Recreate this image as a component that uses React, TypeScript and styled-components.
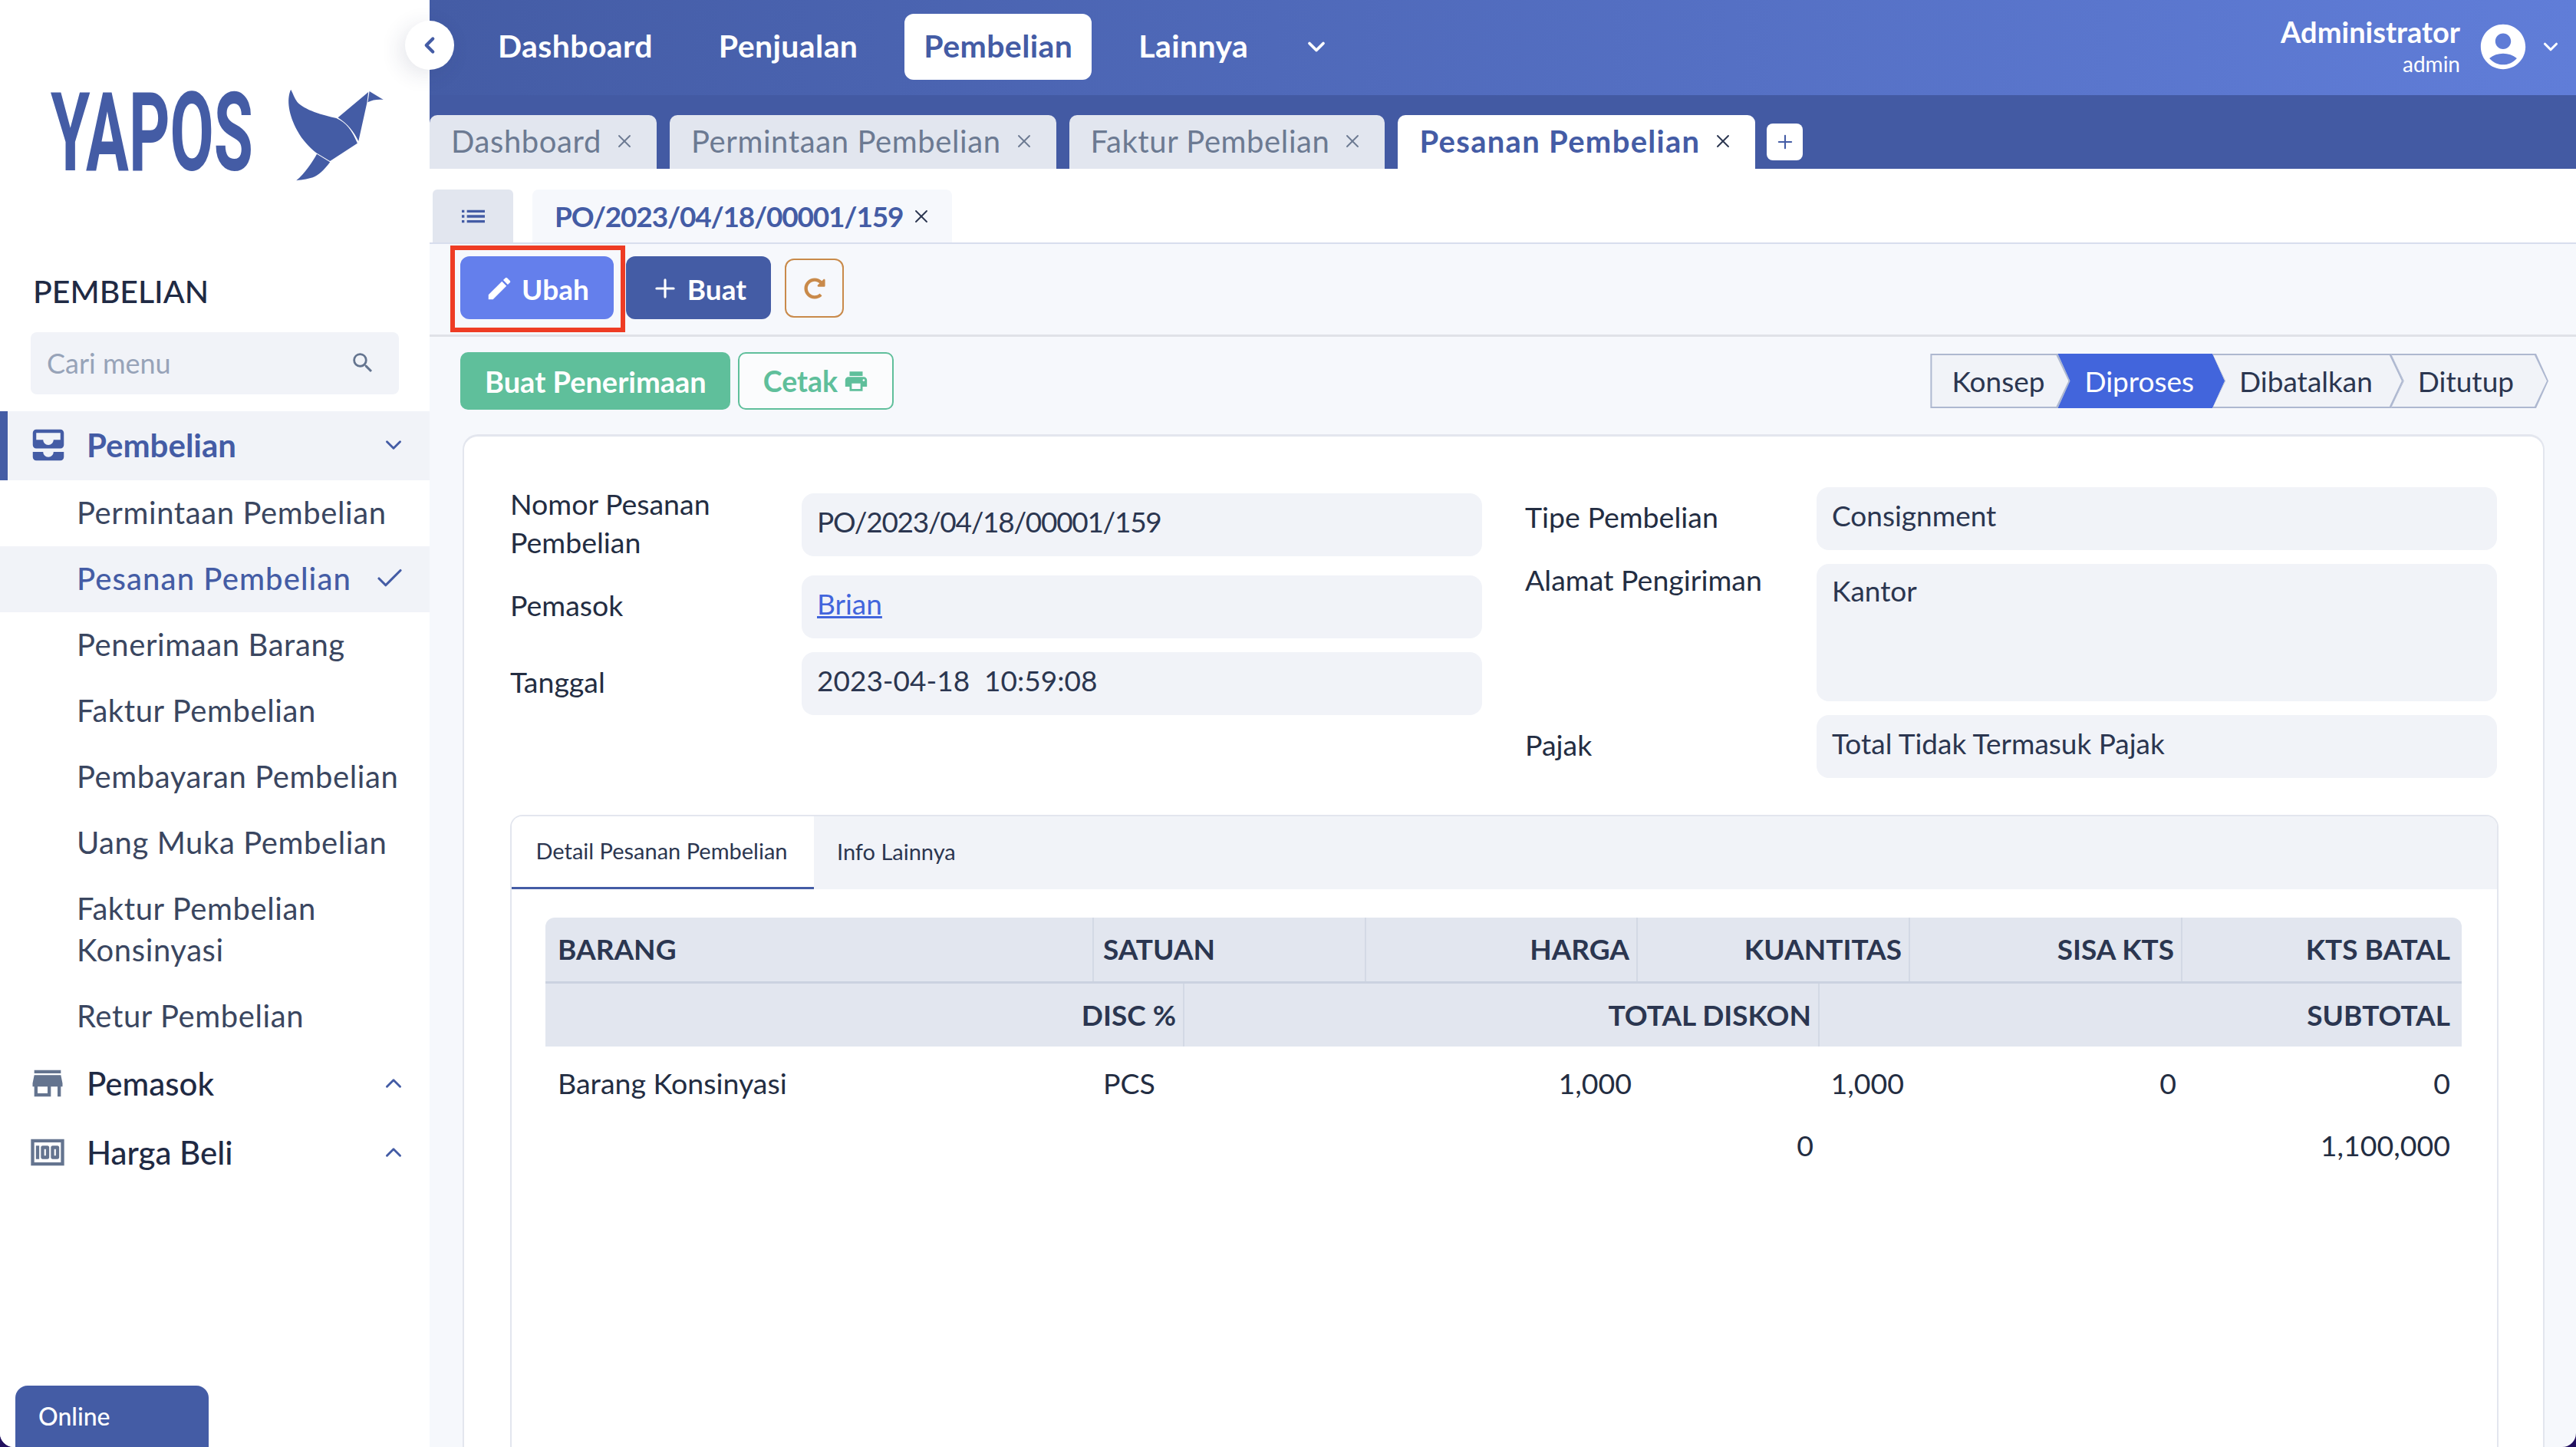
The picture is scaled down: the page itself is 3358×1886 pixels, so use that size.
import React from 'react';
import styled, { createGlobalStyle } from 'styled-components';
import { ChevronDown, ChevronLeft, ChevronUp, Check, Plus, X } from 'lucide-react';
import {
  MdAccountCircle,
  MdAllInbox,
  MdEdit,
  MdList,
  MdMoney,
  MdPrint,
  MdSearch,
  MdStore,
} from 'react-icons/md';
import { FaRedoAlt } from 'react-icons/fa';

const brand = '#445ca5';
const ink = '#2b3650';
const soft = '#f1f3f8';
const page = '#f6f8fc';
const green = '#5fbf9b';

const GlobalStyle = createGlobalStyle`
  html, body {
    margin: 0;
    padding: 0;
    background: #22105f;
  }
  body {
    font-family: Lato, "Open Sans", sans-serif;
    color: ${ink};
  }
  * { box-sizing: border-box; }
`;

const Screen = styled.div`
  width: 3358px;
  height: 1886px;
  display: flex;
  overflow: hidden;
  background: ${page};
  border-radius: 0 0 18px 18px;
`;

const Sidebar = styled.aside`
  position: relative;
  width: 560px;
  flex: none;
  display: flex;
  flex-direction: column;
  background: #fff;
  z-index: 2;
`;

const CollapseButton = styled.div`
  position: absolute;
  top: 27px;
  right: -32px;
  width: 64px;
  height: 64px;
  border-radius: 50%;
  background: #fff;
  color: ${brand};
  display: flex;
  align-items: center;
  justify-content: center;
  box-shadow: -6px 6px 28px rgba(40, 50, 90, 0.12);
`;

const LogoWrap = styled.div`
  height: 340px;
  padding: 76px 0 0 60px;
`;

const SideTitle = styled.h2`
  margin: 0;
  padding-left: 43px;
  height: 93px;
  font-size: 41px;
  line-height: 80px;
  font-weight: 500;
  color: #1f2a44;
`;

const SearchBox = styled.div`
  margin: 0 40px 22px;
  height: 81px;
  border-radius: 8px;
  background: ${soft};
  display: flex;
  align-items: center;
  justify-content: space-between;
  padding: 0 30px 2px 21px;
  font-size: 36px;
  color: #97a3b8;
`;

const MenuParent = styled.div<{ $active?: boolean }>`
  height: 90px;
  display: flex;
  align-items: center;
  padding: 0 30px 2px ${(p) => (p.$active ? 33 : 43)}px;
  font-size: 42px;
  font-weight: ${(p) => (p.$active ? 700 : 500)};
  color: ${(p) => (p.$active ? brand : '#1f2a44')};
  background: ${(p) => (p.$active ? soft : 'transparent')};
  border-left: ${(p) => (p.$active ? `10px solid ${brand}` : '0')};
`;

const MenuIcon = styled.span<{ $muted?: boolean }>`
  width: 77px;
  display: flex;
  align-items: center;
  margin-left: -7px;
  color: ${(p) => (p.$muted ? '#64748f' : brand)};
`;

const MenuLabel = styled.span`
  flex: 1;
`;

const MenuArrow = styled.span`
  color: ${brand};
  display: flex;
`;

const SubItem = styled.div<{ $active?: boolean }>`
  min-height: 86px;
  padding: 15px 31px 17px 100px;
  display: flex;
  align-items: center;
  justify-content: space-between;
  font-size: 40px;
  letter-spacing: ${(p) => (p.$active ? 1.1 : 0.6)}px;
  line-height: 54px;
  color: ${(p) => (p.$active ? brand : '#3a4660')};
  font-weight: ${(p) => (p.$active ? 500 : 400)};
  background: ${(p) => (p.$active ? soft : 'transparent')};
`;

const OnlineBadge = styled.div`
  margin: auto 0 0 20px;
  width: 252px;
  height: 80px;
  background: ${brand};
  border-radius: 16px 16px 0 0;
  padding: 0 0 2px 30px;
  display: flex;
  align-items: center;
  font-size: 32px;
  font-weight: 500;
  color: #fff;
`;

const Main = styled.main`
  flex: 1;
  min-width: 0;
  display: flex;
  flex-direction: column;
`;

const TopBar = styled.header`
  height: 124px;
  flex: none;
  display: flex;
  align-items: center;
  gap: 36px;
  padding: 0 18px 3px 64px;
  background: linear-gradient(90deg, #445ca5, #607dd8);
`;

const NavItem = styled.div<{ $active?: boolean }>`
  height: 86px;
  padding: 0 25px 2px;
  display: flex;
  align-items: center;
  border-radius: 12px;
  font-size: 41px;
  letter-spacing: 0.4px;
  font-weight: 700;
  color: ${(p) => (p.$active ? brand : '#fff')};
  background: ${(p) => (p.$active ? '#fff' : 'transparent')};
`;

const NavArrow = styled.span`
  color: #fff;
  display: flex;
  margin-left: 10px;
`;

const UserBlock = styled.div`
  margin-left: auto;
  display: flex;
  align-items: center;
  color: #fff;
`;

const UserText = styled.div`
  text-align: right;
  margin-right: 21px;
`;

const UserName = styled.div`
  font-size: 38px;
  line-height: 44px;
  font-weight: 700;
`;

const UserRole = styled.div`
  font-size: 28px;
  line-height: 40px;
`;

const UserArrow = styled.span`
  display: flex;
  margin-left: 12px;
`;

const TabStrip = styled.div`
  height: 96px;
  flex: none;
  display: flex;
  align-items: flex-end;
  gap: 17px;
  background: #435aa3;
`;

const PageTab = styled.div<{ $active?: boolean }>`
  height: 70px;
  padding: 0 28px 2px 28px;
  display: flex;
  align-items: center;
  gap: 16px;
  border-radius: 10px 10px 0 0;
  font-size: 40px;
  letter-spacing: ${(p) => (p.$active ? 1.3 : 0.6)}px;
  font-weight: ${(p) => (p.$active ? 700 : 400)};
  color: ${(p) => (p.$active ? brand : '#6c7a92')};
  background: ${(p) => (p.$active ? '#fff' : '#e2e6ef')};
`;

const AddTab = styled.div`
  width: 47px;
  height: 48px;
  margin: 0 0 11px -2px;
  border-radius: 8px;
  background: #fff;
  color: ${brand};
  display: flex;
  align-items: center;
  justify-content: center;
`;

const SubTabStrip = styled.div`
  height: 98px;
  flex: none;
  display: flex;
  align-items: flex-end;
  gap: 25px;
  padding-left: 4px;
  background: #fff;
  border-bottom: 2px solid #d8deed;
`;

const ListTab = styled.div`
  width: 105px;
  height: 69px;
  display: flex;
  align-items: center;
  justify-content: center;
  border-radius: 6px 6px 0 0;
  background: #e2e6ef;
  color: ${brand};
`;

const DocTab = styled.div`
  height: 69px;
  padding: 0 26px 0 29px;
  display: flex;
  align-items: center;
  gap: 10px;
  border-radius: 8px 8px 0 0;
  background: ${page};
  font-size: 37px;
  letter-spacing: -1.2px;
  font-weight: 700;
  color: ${brand};
`;

const DocClose = styled.span`
  color: #2b3650;
  display: flex;
`;

const Toolbar = styled.div`
  height: 121px;
  flex: none;
  display: flex;
  align-items: flex-start;
  gap: 16px;
  padding: 16px 0 0 40px;
  border-bottom: 3px solid #e0e2e8;
`;

const SolidButton = styled.div<{ $bg: string }>`
  height: 82px;
  padding: 2px 32px 0;
  display: flex;
  align-items: center;
  gap: 10px;
  border-radius: 12px;
  font-size: 37px;
  font-weight: 700;
  color: #fff;
  background: ${(p) => p.$bg};
`;

const Highlighted = styled.div`
  position: relative;
  &::after {
    content: '';
    position: absolute;
    inset: -14px -15px -17px -13px;
    border: 6px solid #ee3c24;
    pointer-events: none;
  }
`;

const RefreshButton = styled.div`
  width: 77px;
  height: 77px;
  margin: 3px 0 0 2px;
  border: 2px solid #c98a4a;
  border-radius: 12px;
  color: #c98a4a;
  display: flex;
  align-items: center;
  justify-content: center;
`;

const ActionRow = styled.div`
  flex: none;
  display: flex;
  align-items: center;
  padding: 20px 36px 32px 40px;
`;

const GreenButton = styled.div`
  height: 75px;
  padding: 0 31px 0 32px;
  display: flex;
  align-items: center;
  border-radius: 10px;
  background: ${green};
  font-size: 38px;
  font-weight: 700;
  color: #fff;
`;

const GreenOutline = styled.div`
  height: 75px;
  margin-left: 10px;
  padding: 0 30px 0 31px;
  display: flex;
  align-items: center;
  gap: 7px;
  border: 2px solid ${green};
  border-radius: 10px;
  background: #fbfcfd;
  font-size: 37.5px;
  font-weight: 700;
  color: ${green};
`;

const Steps = styled.div`
  margin-left: auto;
  display: flex;
`;

const arrowShape = 'polygon(0 0, calc(100% - 16px) 0, 100% 50%, calc(100% - 16px) 100%, 0 100%, 16px 50%)';
const firstShape = 'polygon(0 0, calc(100% - 16px) 0, 100% 50%, calc(100% - 16px) 100%, 0 100%)';

const Step = styled.div<{ $active?: boolean; $first?: boolean; $last?: boolean }>`
  position: relative;
  isolation: isolate;
  height: 71px;
  padding: 0 ${(p) => (p.$first ? 33 : p.$last ? 45 : 40)}px 0 ${(p) => (p.$first ? 28 : 35)}px;
  margin-left: ${(p) => (p.$first ? 0 : -16)}px;
  display: flex;
  align-items: center;
  font-size: 37px;
  color: ${(p) => (p.$active ? '#fff' : ink)};
  background: ${(p) => (p.$active ? '#4265dc' : '#aeb8d0')};
  clip-path: ${(p) => (p.$first ? firstShape : arrowShape)};

  &::before {
    content: '';
    position: absolute;
    inset: 2px 2px 2px ${(p) => (p.$first ? 2 : 1)}px;
    z-index: -1;
    display: ${(p) => (p.$active ? 'none' : 'block')};
    background: ${soft};
    clip-path: ${(p) => (p.$first ? firstShape : arrowShape)};
  }
`;

const Card = styled.section`
  flex: 1;
  min-height: 0;
  margin: 0 41px 0 43px;
  padding: 63px 58px 0 60px;
  overflow: hidden;
  background: #fff;
  border: 2px solid #e3e6ee;
  border-top-width: 3px;
  border-bottom: 0;
  border-radius: 20px 20px 0 0;
`;

const FormGrid = styled.div`
  display: grid;
  grid-template-columns: 1267px 1267px;
  gap: 56px;
  height: 430px;
`;

const FieldColumn = styled.div<{ $offset?: number }>`
  display: flex;
  flex-direction: column;
  gap: 18px;
  padding-top: ${(p) => p.$offset || 0}px;
`;

const Field = styled.div<{ $top?: boolean }>`
  display: grid;
  grid-template-columns: 380px 1fr;
  align-items: ${(p) => (p.$top ? 'flex-start' : 'center')};
`;

const FieldLabel = styled.div`
  font-size: 37.5px;
  line-height: 50px;
  margin-top: -4px;
  color: #232d42;
`;

const FieldValue = styled.div<{ $tall?: boolean }>`
  height: ${(p) => (p.$tall ? 179 : 82)}px;
  padding: ${(p) => (p.$tall ? '10px' : '12px')} 20px 0;
  border-radius: 16px;
  background: ${soft};
  font-size: 37px;
  line-height: 50px;
  color: ${ink};
  white-space: pre;
`;

const TightText = styled.span`
  letter-spacing: -1.3px;
`;

const SupplierLink = styled.a`
  color: #4265dc;
  text-decoration: underline;
`;

const Panel = styled.div`
  border: 2px solid #e3e6ee;
  border-bottom: 0;
  border-radius: 16px 16px 0 0;
  height: 900px;
`;

const PanelTabs = styled.div`
  height: 95px;
  display: flex;
  background: ${soft};
  border-radius: 14px 14px 0 0;
  overflow: hidden;
`;

const PanelTab = styled.div<{ $active?: boolean }>`
  width: ${(p) => (p.$active ? '394px' : 'auto')};
  padding: 0 ${(p) => (p.$active ? 3 : 0)}px 4px ${(p) => (p.$active ? 0 : 30)}px;
  display: flex;
  align-items: center;
  justify-content: center;
  font-size: 29px;
  color: ${ink};
  background: ${(p) => (p.$active ? '#fff' : 'transparent')};
  border-bottom: ${(p) => (p.$active ? `3px solid ${brand}` : '0')};
`;

const TableWrap = styled.div`
  margin: 37px 46px 0 44px;
`;

const Head = styled.div`
  background: #e2e6ef;
  border-radius: 12px 12px 0 0;
  overflow: hidden;
`;

const Row = styled.div<{ $cols: string; $height: number; $line?: boolean }>`
  display: grid;
  grid-template-columns: ${(p) => p.$cols};
  height: ${(p) => p.$height}px;
  border-bottom: ${(p) => (p.$line ? '3px solid #cbd2e0' : '0')};
`;

const HeadCell = styled.div<{ $right?: boolean; $last?: boolean }>`
  display: flex;
  align-items: center;
  justify-content: ${(p) => (p.$right ? 'flex-end' : 'flex-start')};
  padding: 0 ${(p) => (p.$last ? 15 : 9)}px 2px 12px;
  font-size: 37px;
  font-weight: 700;
  color: ${ink};
  border-right: ${(p) => (p.$last ? '0' : '2px solid #d3d9e5')};
  &:first-child { padding-left: 16px; }
`;

const DataCell = styled.div<{ $right?: boolean; $last?: boolean }>`
  display: flex;
  align-items: center;
  justify-content: ${(p) => (p.$right ? 'flex-end' : 'flex-start')};
  padding: 0 ${(p) => (p.$last ? 15 : 8)}px 2px 12px;
  font-size: 37.5px;
  color: #232d42;
  &:first-child { padding-left: 16px; }
`;

const DataBody = styled.div`
  padding-top: 7px;
`;

const LogoSvg = () => (
  <svg width="490" height="180" viewBox="0 -40 490 180">
    <text
      transform="translate(6 106) scale(0.585 1)"
      fill={brand}
      fontFamily="Roboto, sans-serif"
      fontWeight="700"
      fontSize="142"
    >
      YAPOS
    </text>
    <g transform="translate(-60 -56) scale(0.357 0.3333)" fill={brand}>
      <path d="M1062 170 C1045 210 1055 270 1085 330 C1105 370 1130 395 1155 418 L1205 450 L1305 380 C1285 330 1265 300 1228 282 C1180 270 1110 250 1085 218 C1075 205 1070 185 1062 170 Z" />
      <path d="M1234 280 L1345 180 L1340 222 L1309 372 C1292 335 1270 305 1234 280 Z" />
      <path d="M1349 177 L1400 210 C1380 208 1360 210 1343 220 Z" />
      <path d="M1157 422 L1205 454 C1187 480 1170 500 1150 510 C1130 520 1105 522 1082 526 C1115 495 1140 455 1157 422 Z" />
    </g>
  </svg>
);

const subMenu = [
  'Permintaan Pembelian',
  'Pesanan Pembelian',
  'Penerimaan Barang',
  'Faktur Pembelian',
  'Pembayaran Pembelian',
  'Uang Muka Pembelian',
  'Faktur Pembelian Konsinyasi',
  'Retur Pembelian',
];

const pageTabs = ['Dashboard', 'Permintaan Pembelian', 'Faktur Pembelian', 'Pesanan Pembelian'];

const sixCols = '715px 355px 354px 355px 355px 1fr';
const threeCols = '833px 828px 1fr';

const App: React.FC = () => {
  return (
    <>
      <GlobalStyle />
      <Screen>
        <Sidebar>
          <CollapseButton>
            <ChevronLeft size={34} strokeWidth={3} />
          </CollapseButton>
          <LogoWrap>
            <LogoSvg />
          </LogoWrap>
          <SideTitle>PEMBELIAN</SideTitle>
          <SearchBox>
            Cari menu
            <MdSearch size={34} color="#64748f" />
          </SearchBox>
          <MenuParent $active>
            <MenuIcon>
              <MdAllInbox size={54} />
            </MenuIcon>
            <MenuLabel>Pembelian</MenuLabel>
            <MenuArrow>
              <ChevronDown size={34} strokeWidth={2} />
            </MenuArrow>
          </MenuParent>
          {subMenu.map((item) => (
            <SubItem key={item} $active={item === 'Pesanan Pembelian'}>
              <span>{item}</span>
              {item === 'Pesanan Pembelian' && <Check size={42} color={brand} strokeWidth={1.8} />}
            </SubItem>
          ))}
          <MenuParent>
            <MenuIcon $muted>
              <MdStore size={52} />
            </MenuIcon>
            <MenuLabel>Pemasok</MenuLabel>
            <MenuArrow>
              <ChevronUp size={34} strokeWidth={2} />
            </MenuArrow>
          </MenuParent>
          <MenuParent>
            <MenuIcon $muted>
              <MdMoney size={52} />
            </MenuIcon>
            <MenuLabel>Harga Beli</MenuLabel>
            <MenuArrow>
              <ChevronUp size={34} strokeWidth={2} />
            </MenuArrow>
          </MenuParent>
          <OnlineBadge>Online</OnlineBadge>
        </Sidebar>

        <Main>
          <TopBar>
            <NavItem>Dashboard</NavItem>
            <NavItem>Penjualan</NavItem>
            <NavItem $active>Pembelian</NavItem>
            <NavItem>Lainnya</NavItem>
            <NavArrow>
              <ChevronDown size={36} strokeWidth={2.5} />
            </NavArrow>
            <UserBlock>
              <UserText>
                <UserName>Administrator</UserName>
                <UserRole>admin</UserRole>
              </UserText>
              <MdAccountCircle size={70} />
              <UserArrow>
                <ChevronDown size={30} strokeWidth={2.5} />
              </UserArrow>
            </UserBlock>
          </TopBar>

          <TabStrip>
            {pageTabs.map((tab) => (
              <PageTab key={tab} $active={tab === 'Pesanan Pembelian'}>
                {tab}
                <X size={28} strokeWidth={1.6} color={tab === 'Pesanan Pembelian' ? '#2b3650' : '#6c7a92'} />
              </PageTab>
            ))}
            <AddTab>
              <Plus size={28} strokeWidth={1.8} />
            </AddTab>
          </TabStrip>

          <SubTabStrip>
            <ListTab>
              <MdList size={40} />
            </ListTab>
            <DocTab>
              PO/2023/04/18/00001/159
              <DocClose>
                <X size={28} strokeWidth={1.6} />
              </DocClose>
            </DocTab>
          </SubTabStrip>

          <Toolbar>
            <Highlighted>
              <SolidButton $bg="#647fec">
                <MdEdit size={38} />
                Ubah
              </SolidButton>
            </Highlighted>
            <SolidButton $bg={brand}>
              <Plus size={38} strokeWidth={2} />
              Buat
            </SolidButton>
            <RefreshButton>
              <FaRedoAlt size={28} />
            </RefreshButton>
          </Toolbar>

          <ActionRow>
            <GreenButton>Buat Penerimaan</GreenButton>
            <GreenOutline>
              Cetak
              <MdPrint size={34} />
            </GreenOutline>
            <Steps>
              <Step $first>Konsep</Step>
              <Step $active>Diproses</Step>
              <Step>Dibatalkan</Step>
              <Step $last>Ditutup</Step>
            </Steps>
          </ActionRow>

          <Card>
            <FormGrid>
              <FieldColumn $offset={4}>
                <Field>
                  <FieldLabel>
                    Nomor Pesanan
                    <br />
                    Pembelian
                  </FieldLabel>
                  <FieldValue>
                    <TightText>PO/2023/04/18/00001/159</TightText>
                  </FieldValue>
                </Field>
                <Field>
                  <FieldLabel>Pemasok</FieldLabel>
                  <FieldValue>
                    <SupplierLink>Brian</SupplierLink>
                  </FieldValue>
                </Field>
                <Field>
                  <FieldLabel>Tanggal</FieldLabel>
                  <FieldValue>2023-04-18  10:59:08</FieldValue>
                </Field>
              </FieldColumn>
              <FieldColumn $offset={3}>
                <Field>
                  <FieldLabel>Tipe Pembelian</FieldLabel>
                  <FieldValue>Consignment</FieldValue>
                </Field>
                <Field $top>
                  <FieldLabel>Alamat Pengiriman</FieldLabel>
                  <FieldValue $tall>Kantor</FieldValue>
                </Field>
                <Field>
                  <FieldLabel>Pajak</FieldLabel>
                  <FieldValue>Total Tidak Termasuk Pajak</FieldValue>
                </Field>
              </FieldColumn>
            </FormGrid>

            <Panel>
              <PanelTabs>
                <PanelTab $active>Detail Pesanan Pembelian</PanelTab>
                <PanelTab>Info Lainnya</PanelTab>
              </PanelTabs>
              <TableWrap>
                <Head>
                  <Row $cols={sixCols} $height={86} $line>
                    <HeadCell>BARANG</HeadCell>
                    <HeadCell>SATUAN</HeadCell>
                    <HeadCell $right>HARGA</HeadCell>
                    <HeadCell $right>KUANTITAS</HeadCell>
                    <HeadCell $right>SISA KTS</HeadCell>
                    <HeadCell $right $last>KTS BATAL</HeadCell>
                  </Row>
                  <Row $cols={threeCols} $height={82}>
                    <HeadCell $right>DISC %</HeadCell>
                    <HeadCell $right>TOTAL DISKON</HeadCell>
                    <HeadCell $right $last>SUBTOTAL</HeadCell>
                  </Row>
                </Head>
                <DataBody>
                  <Row $cols={sixCols} $height={82}>
                    <DataCell>Barang Konsinyasi</DataCell>
                    <DataCell>PCS</DataCell>
                    <DataCell $right>1,000</DataCell>
                    <DataCell $right>1,000</DataCell>
                    <DataCell $right>0</DataCell>
                    <DataCell $right $last>0</DataCell>
                  </Row>
                  <Row $cols={threeCols} $height={81}>
                    <DataCell />
                    <DataCell $right>0</DataCell>
                    <DataCell $right $last>1,100,000</DataCell>
                  </Row>
                </DataBody>
              </TableWrap>
            </Panel>
          </Card>
        </Main>
      </Screen>
    </>
  );
};

export default App;
